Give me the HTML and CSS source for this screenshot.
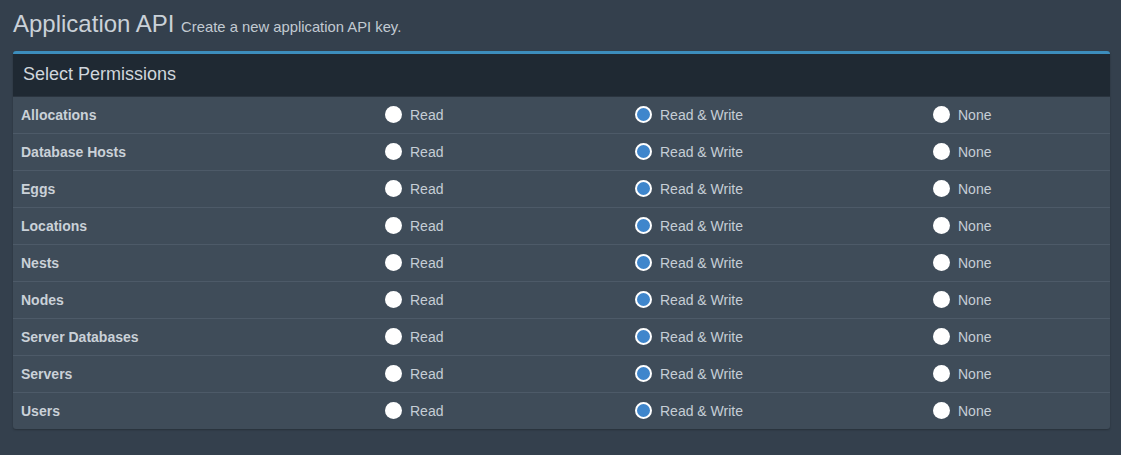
FILE: index.html
```html
<!DOCTYPE html>
<html>
<head>
<meta charset="utf-8">
<link rel="stylesheet" href="styles.css">
</head>
<body>
<div class="page">
  <h1 class="title">Application API <small>Create a new application API key.</small></h1>
  <div class="box">
    <div class="box-header">Select Permissions</div>
    <div class="rows">
      <div class="row"><div class="name">Allocations</div><label class="opt"><span class="radio"></span>Read</label><label class="opt"><span class="radio on"></span>Read &amp; Write</label><label class="opt"><span class="radio"></span>None</label></div>
      <div class="row"><div class="name">Database Hosts</div><label class="opt"><span class="radio"></span>Read</label><label class="opt"><span class="radio on"></span>Read &amp; Write</label><label class="opt"><span class="radio"></span>None</label></div>
      <div class="row"><div class="name">Eggs</div><label class="opt"><span class="radio"></span>Read</label><label class="opt"><span class="radio on"></span>Read &amp; Write</label><label class="opt"><span class="radio"></span>None</label></div>
      <div class="row"><div class="name">Locations</div><label class="opt"><span class="radio"></span>Read</label><label class="opt"><span class="radio on"></span>Read &amp; Write</label><label class="opt"><span class="radio"></span>None</label></div>
      <div class="row"><div class="name">Nests</div><label class="opt"><span class="radio"></span>Read</label><label class="opt"><span class="radio on"></span>Read &amp; Write</label><label class="opt"><span class="radio"></span>None</label></div>
      <div class="row"><div class="name">Nodes</div><label class="opt"><span class="radio"></span>Read</label><label class="opt"><span class="radio on"></span>Read &amp; Write</label><label class="opt"><span class="radio"></span>None</label></div>
      <div class="row"><div class="name">Server Databases</div><label class="opt"><span class="radio"></span>Read</label><label class="opt"><span class="radio on"></span>Read &amp; Write</label><label class="opt"><span class="radio"></span>None</label></div>
      <div class="row"><div class="name">Servers</div><label class="opt"><span class="radio"></span>Read</label><label class="opt"><span class="radio on"></span>Read &amp; Write</label><label class="opt"><span class="radio"></span>None</label></div>
      <div class="row"><div class="name">Users</div><label class="opt"><span class="radio"></span>Read</label><label class="opt"><span class="radio on"></span>Read &amp; Write</label><label class="opt"><span class="radio"></span>None</label></div>
    </div>
  </div>
</div>
</body>
</html>
```
FILE: styles.css
```css
html, body {
  margin: 0;
  padding: 0;
  background: #34404d;
  font-family: "Liberation Sans", Arial, sans-serif;
  color: #cad1d8;
  height: 100%;
}
.page {
  padding: 9px 11px 0 13px;
}
.title {
  margin: 0 0 9px 0;
  font-size: 24px;
  font-weight: normal;
  line-height: 30px;
  color: #cad1d8;
}
.title small {
  font-size: 14.8px;
  color: #c2cad2;
}
.box {
  border-top: 3px solid #3c8dbc;
  border-radius: 3px;
  background: #3f4c59;
  box-shadow: 0 1px 2px rgba(0,0,0,0.25);
}
.box-header {
  background: #1f2933;
  height: 42px;
  line-height: 40px;
  padding-left: 10px;
  font-size: 18px;
  color: #d0d6dc;
  border-bottom: 1px solid #2a343f;
}
.row {
  display: grid;
  grid-template-columns: 364px 250px 298px 1fr;
  height: 37px;
  align-items: center;
  border-top: 1px solid #4d5a68;
  box-sizing: border-box;
}
.row:first-child {
  border-top: none;
  height: 36px;
}
.name {
  padding-left: 8px;
  font-weight: bold;
  font-size: 14px;
  color: #cad1d8;
}
.opt {
  display: flex;
  align-items: center;
  padding-left: 8px;
  font-size: 14px;
  color: #c6ced6;
}
.radio {
  width: 17px;
  height: 17px;
  border-radius: 50%;
  background: #ffffff;
  margin-right: 8px;
  box-sizing: border-box;
  margin-top: -2px;
}
.radio.on {
  background: #3f86cc;
  border: 2px solid #ffffff;
}
```
